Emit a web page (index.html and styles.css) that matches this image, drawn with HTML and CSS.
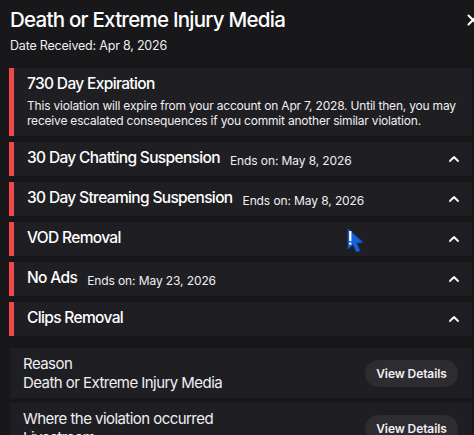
FILE: index.html
```html
<!DOCTYPE html>
<html>
<head>
<meta charset="utf-8">
<link rel="stylesheet" href="styles.css">
</head>
<body>
<div class="page">
  <div class="header">
    <h1 class="title">Death or Extreme Injury Media</h1>
    <button class="close" aria-label="Close">
      <svg width="12" height="12" viewBox="0 0 12 12"><path d="M1.5 1.5 L10.5 10.5 M10.5 1.5 L1.5 10.5" stroke="#fff" stroke-width="2" stroke-linecap="round"/></svg>
    </button>
  </div>
  <div class="date">Date Received: Apr 8, 2026</div>

  <div class="penalties">
    <div class="card expiry">
      <div class="card-body">
        <div class="card-title">730 Day Expiration</div>
        <p class="card-text">This violation will expire from your account on Apr 7, 2028. Until then, you may receive escalated consequences if you commit another similar violation.</p>
      </div>
    </div>

    <div class="card row">
      <div class="card-head"><span class="card-title">30 Day Chatting Suspension</span><span class="ends">Ends on: May 8, 2026</span></div>
      <svg class="chev" width="10" height="6" viewBox="0 0 10 6"><path d="M1 5 L5 1 L9 5" fill="none" stroke="#fff" stroke-width="1.8" stroke-linecap="round" stroke-linejoin="round"/></svg>
    </div>
    <div class="card row">
      <div class="card-head"><span class="card-title">30 Day Streaming Suspension</span><span class="ends">Ends on: May 8, 2026</span></div>
      <svg class="chev" width="10" height="6" viewBox="0 0 10 6"><path d="M1 5 L5 1 L9 5" fill="none" stroke="#fff" stroke-width="1.8" stroke-linecap="round" stroke-linejoin="round"/></svg>
    </div>
    <div class="card row">
      <div class="card-head"><span class="card-title">VOD Removal</span></div>
      <svg class="chev" width="10" height="6" viewBox="0 0 10 6"><path d="M1 5 L5 1 L9 5" fill="none" stroke="#fff" stroke-width="1.8" stroke-linecap="round" stroke-linejoin="round"/></svg>
    </div>
    <div class="card row">
      <div class="card-head"><span class="card-title">No Ads</span><span class="ends">Ends on: May 23, 2026</span></div>
      <svg class="chev" width="10" height="6" viewBox="0 0 10 6"><path d="M1 5 L5 1 L9 5" fill="none" stroke="#fff" stroke-width="1.8" stroke-linecap="round" stroke-linejoin="round"/></svg>
    </div>
    <div class="card row">
      <div class="card-head"><span class="card-title">Clips Removal</span></div>
      <svg class="chev" width="10" height="6" viewBox="0 0 10 6"><path d="M1 5 L5 1 L9 5" fill="none" stroke="#fff" stroke-width="1.8" stroke-linecap="round" stroke-linejoin="round"/></svg>
    </div>
  </div>

  <div class="info">
    <div class="info-card">
      <div class="info-text">
        <div>Reason</div>
        <div>Death or Extreme Injury Media</div>
      </div>
      <button class="details">View Details</button>
    </div>
    <div class="info-card">
      <div class="info-text">
        <div>Where the violation occurred</div>
        <div>Livestream</div>
      </div>
      <button class="details">View Details</button>
    </div>
  </div>

  <svg class="cursor" width="20" height="26" viewBox="0 0 20 26">
    <path d="M2 1 L2 21 L7 16.5 L10.5 24 L14 22.5 L10.5 15 L17 14.5 Z" fill="#1565d8" stroke="#0d4fb0" stroke-width="1" stroke-linejoin="round"/>
    <rect x="3.2" y="3" width="2.2" height="10" fill="#fff"/>
    <rect x="3.2" y="14.5" width="2.2" height="2.2" fill="#fff"/>
  </svg>
</div>
</body>
</html>
```

FILE: styles.css
```css
* { box-sizing: border-box; }
html, body { margin: 0; padding: 0; background: #18181b; }
body {
  font-family: Inter, "Noto Sans", "Liberation Sans", sans-serif;
  color: #efeff1;
  width: 474px;
  height: 435px;
  overflow: hidden;
}
.page { position: relative; padding: 6px 2px 0 9px; }
.header { display: flex; justify-content: space-between; align-items: flex-start; }
.title {
  margin: 0;
  font-size: 20.5px;
  font-weight: 500;
  line-height: 28px;
  letter-spacing: -0.75px;
  padding-left: 1px;
  color: #fff;
}
.close {
  background: none;
  border: 0;
  padding: 0;
  margin: 8px -8px 0 0;
  width: 14px;
  height: 14px;
}
.date {
  font-size: 12.5px;
  line-height: 16px;
  margin-top: 4px;
  padding-left: 1px;
  letter-spacing: -0.2px;
  color: #efeff1;
}
.penalties {
  display: flex;
  flex-direction: column;
  gap: 6px;
  margin-top: 14px;
}
.card {
  background: #1f1f23;
  border-left: 5px solid #f04848;
  padding-left: 13px;
  padding-right: 14px;
}
.expiry { padding-top: 6px; padding-right: 8px; height: 68px; }
.card-title {
  font-size: 15.5px;
  font-weight: 500;
  line-height: 20px;
  letter-spacing: -0.65px;
  color: #fff;
}
.card-text {
  margin: 4px 0 0;
  font-size: 12px;
  line-height: 15px;
  letter-spacing: -0.2px;
  color: #efeff1;
}
.row {
  height: 34px;
  display: flex;
  align-items: center;
  justify-content: space-between;
}
.card-head { display: flex; align-items: baseline; gap: 10px; margin-top: -3px; }
.ends { font-size: 12px; letter-spacing: -0.1px; color: #efeff1; position: relative; top: 2px; }
.chev { margin-right: -1px; }
.info {
  display: flex;
  flex-direction: column;
  gap: 5px;
  margin-top: 12px;
  margin-left: 1px;
}
.info-card {
  background: #1f1f23;
  height: 50px;
  display: flex;
  align-items: center;
  justify-content: space-between;
  padding: 0 14px 0 13px;
}
.info-text { font-size: 15px; line-height: 19px; letter-spacing: -0.55px; color: #efeff1; }
.details {
  background: #2c2c31;
  border: 0;
  border-radius: 14px;
  width: 93px;
  height: 27px;
  font-family: inherit;
  font-size: 12px;
  font-weight: 600;
  letter-spacing: -0.1px;
  color: #efeff1;
  padding: 0;
}
.cursor { position: absolute; left: 346px; top: 228px; }
```
